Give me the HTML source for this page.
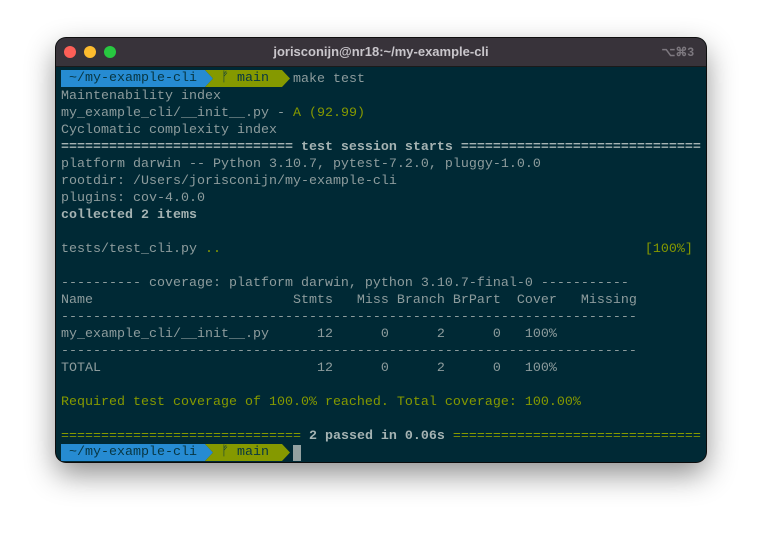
<!DOCTYPE html>
<html><head><style>
html,body{margin:0;padding:0;background:#fff;width:762px;height:536px;overflow:hidden}
.win{position:absolute;left:56px;top:38px;width:650px;height:424px;border-radius:10px;overflow:hidden;background:#002935;box-shadow:0 12px 30px rgba(0,0,0,0.45),0 0 0 1px #111}
.tb{height:28px;background:#38333a;border-bottom:1px solid #1a1a1a;position:relative;font-family:"Liberation Sans",sans-serif;font-weight:bold;font-size:13px;color:#c9c6cb;text-align:center;line-height:28px}
.dot{position:absolute;top:8px;width:12px;height:12px;border-radius:50%}
.sc{position:absolute;right:12px;top:0;color:#7d787f;font-size:12px}
pre{margin:0;position:absolute;left:5px;top:33px;font-family:"Liberation Mono",monospace;font-size:13.33px;line-height:17px;color:#8d9c9d}
.g{color:#859900}.b{font-weight:bold;color:#a5b3b3}
.cur{display:inline-block;width:8px;height:16px;background:#93a1a1;vertical-align:top}
.pt{position:absolute;font-family:"Liberation Mono",monospace;font-size:13.33px;line-height:17px;color:#073642;white-space:pre}
</style></head><body>
<div class="win">
<div class="tb"><span class="dot" style="left:8px;background:#fe5f57"></span><span class="dot" style="left:28px;background:#febc2e"></span><span class="dot" style="left:48px;background:#28c840"></span>jorisconijn@nr18:~/my-example-cli<span class="sc">⌥⌘3</span></div>
<svg style="position:absolute;left:5px;top:32px" width="240" height="17"><polygon points="0,0 144,0 152,8.5 144,17 0,17" fill="#268bd2"/><polygon points="144,0 221,0 229,8.5 221,17 144,17 152,8.5" fill="#859900"/></svg>
<svg style="position:absolute;left:5px;top:406px" width="240" height="17"><polygon points="0,0 144,0 152,8.5 144,17 0,17" fill="#268bd2"/><polygon points="144,0 221,0 229,8.5 221,17 144,17 152,8.5" fill="#859900"/></svg>
<div class="pt" style="left:13px;top:32px">~/my-example-cli</div>
<div class="pt" style="left:165px;top:32px">ᚠ main</div>
<div class="pt" style="left:13px;top:406px">~/my-example-cli</div>
<div class="pt" style="left:165px;top:406px">ᚠ main</div>
<pre>                             <span>make test</span>
Maintenability index
my_example_cli/__init__.py - <span class="g">A (92.99)</span>
Cyclomatic complexity index
<span class="b">============================= test session starts ==============================</span>
platform darwin -- Python 3.10.7, pytest-7.2.0, pluggy-1.0.0
rootdir: /Users/jorisconijn/my-example-cli
plugins: cov-4.0.0
<span class="b">collected 2 items</span>

tests/test_cli.py <span class="g">..                                                     [100%]</span>

---------- coverage: platform darwin, python 3.10.7-final-0 -----------
Name                         Stmts   Miss Branch BrPart  Cover   Missing
------------------------------------------------------------------------
my_example_cli/__init__.py      12      0      2      0   100%
------------------------------------------------------------------------
TOTAL                           12      0      2      0   100%

<span class="g">Required test coverage of 100.0% reached. Total coverage: 100.00%</span>

<span class="g">==============================</span><span class="b"> 2 passed in 0.06s </span><span class="g">===============================</span>
                             <span class="cur"></span></pre>
</div>
</body></html>
